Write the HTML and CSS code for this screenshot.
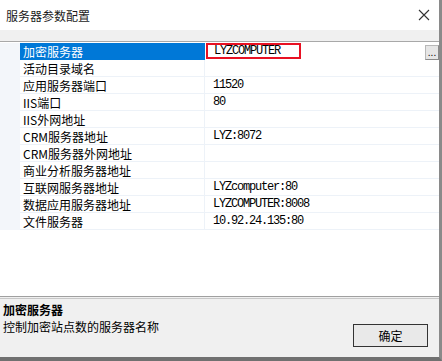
FILE: index.html
```html
<!DOCTYPE html>
<html lang="zh">
<head>
<meta charset="utf-8">
<title>服务器参数配置</title>
<link rel="stylesheet" href="styles.css">
</head>
<body>
<div class="window">
  <div class="titlebar">
    <span class="title">服务器参数配置</span>
    <svg class="close" width="12" height="12" viewBox="0 0 12 12"><path d="M1 1 L11 11 M11 1 L1 11" stroke="#333" stroke-width="1.1" fill="none"/></svg>
  </div>
  <div class="strip"></div>
  <div class="grid">
    <div class="row selected"><div class="margin"></div><div class="name">加密服务器</div><div class="value"><span class="editbox">LYZCOMPUTER</span><span class="dots">...</span></div></div>
    <div class="row"><div class="margin"></div><div class="name">活动目录域名</div><div class="value"></div></div>
    <div class="row"><div class="margin"></div><div class="name">应用服务器端口</div><div class="value">11520</div></div>
    <div class="row"><div class="margin"></div><div class="name">IIS端口</div><div class="value">80</div></div>
    <div class="row"><div class="margin"></div><div class="name">IIS外网地址</div><div class="value"></div></div>
    <div class="row"><div class="margin"></div><div class="name">CRM服务器地址</div><div class="value">LYZ:8072</div></div>
    <div class="row"><div class="margin"></div><div class="name">CRM服务器外网地址</div><div class="value"></div></div>
    <div class="row"><div class="margin"></div><div class="name">商业分析服务器地址</div><div class="value"></div></div>
    <div class="row"><div class="margin"></div><div class="name">互联网服务器地址</div><div class="value">LYZcomputer:80</div></div>
    <div class="row"><div class="margin"></div><div class="name">数据应用服务器地址</div><div class="value">LYZCOMPUTER:8008</div></div>
    <div class="row"><div class="margin"></div><div class="name">文件服务器</div><div class="value">10.92.24.135:80</div></div>
  </div>
  <div class="sep"></div>
  <div class="help">
    <div class="help-text">
      <div class="help-title">加密服务器</div>
      <div class="help-desc">控制加密站点数的服务器名称</div>
    </div>
    <button class="ok">确定</button>
  </div>
</div>
</body>
</html>
```
FILE: styles.css
```css
html, body {
  margin: 0;
  padding: 0;
  background: #ffffff;
}
body {
  width: 442px;
  height: 361px;
  overflow: hidden;
  font-family: "Noto Sans CJK SC", "Noto Sans", sans-serif;
  font-size: 12px;
  color: #000;
}
.window {
  width: 439px;
  height: 357px;
  border-right: 3px solid #8a8a8a;
  border-bottom: 4px solid #707070;
  display: flex;
  flex-direction: column;
  background: #fff;
}
.titlebar {
  height: 30px;
  flex: none;
  display: flex;
  align-items: center;
  justify-content: space-between;
  padding: 0 9px 0 6px;
}
.title {
  font-size: 12px;
  color: #1a1a1a;
}
.close {
  display: block;
}
.strip {
  height: 11px;
  flex: none;
  background: #f0f0f0;
  border-bottom: 1px solid #a8a8a8;
}
.grid {
  flex: 1;
  padding-top: 1px;
  background: #fff;
}
.row {
  display: grid;
  grid-template-columns: 20px 185px 1fr;
  height: 17px;
}
.margin {
  background: #f3f6fa;
}
.name {
  padding-left: 3px;
  line-height: 17px;
  height: 17px;
  border-bottom: 1px solid #edf2f8;
  border-right: 1px solid #edf2f8;
  box-sizing: border-box;
  white-space: nowrap;
  overflow: hidden;
}
.value {
  padding-left: 8px;
  height: 17px;
  line-height: 17px;
  box-sizing: border-box;
  border-bottom: 1px solid #edf2f8;
  font-family: "Liberation Mono", monospace;
  font-size: 12px;
  letter-spacing: -1.2px;
  display: flex;
  align-items: center;
  white-space: nowrap;
}
.selected .name {
  background: #0078d7;
  color: #fff;
  border-color: #0078d7;
}
.selected .value {
  padding-left: 1px;
  border-bottom-color: transparent;
  justify-content: space-between;
}
.editbox {
  display: block;
  width: 95px;
  height: 16px;
  box-sizing: border-box;
  border: 2px solid #e81123;
  padding-left: 6px;
  line-height: 12px;
}
.dots {
  display: block;
  width: 14px;
  height: 15px;
  margin-top: 2px;
  box-sizing: border-box;
  background: #e6e6e6;
  border: 1px solid #b8b8b8;
  border-right-color: #8a8a8a;
  border-bottom-color: #8a8a8a;
  font-family: "Liberation Sans", sans-serif;
  font-size: 10px;
  letter-spacing: 0;
  line-height: 14px;
  text-align: center;
}
.sep {
  height: 3px;
  flex: none;
  border-top: 1px solid #a0a0a0;
  border-bottom: 1px solid #c8c8c8;
  box-sizing: border-box;
  background: #f0f0f0;
}
.help {
  height: 58px;
  flex: none;
  background: #f0f0f0;
  display: flex;
  justify-content: space-between;
  align-items: flex-end;
  padding: 0 11px 10px 3px;
  box-sizing: border-box;
  position: relative;
}
.help-text {
  align-self: flex-start;
  padding-top: 2px;
}
.help-title {
  font-weight: bold;
  line-height: 17px;
}
.help-desc {
  line-height: 17px;
}
.ok {
  width: 75px;
  height: 23px;
  border: 1px solid #333;
  background: #e9e9e9;
  font-family: "Noto Sans CJK SC", sans-serif;
  font-size: 12px;
  color: #000;
  padding: 0;
}
```
